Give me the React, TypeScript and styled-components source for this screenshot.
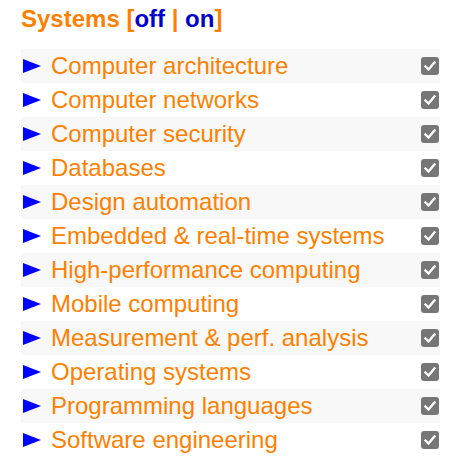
import React from "react";
import styled, { createGlobalStyle } from "styled-components";

const Global = createGlobalStyle`
  html, body { margin: 0; padding: 0; background: #fff; }
  body { font-family: "Liberation Sans", Arial, sans-serif; }
`;

const Panel = styled.div`
  padding: 5px 0 0 21px;
  width: 419px;
`;

const Title = styled.div`
  font-size: 24px;
  font-weight: bold;
  line-height: 28px;
  color: #ff7f00;
  margin-bottom: 16px;
  white-space: nowrap;
`;

const Link = styled.span`
  color: #0000cc;
`;

const List = styled.div`
  display: flex;
  flex-direction: column;
`;

const Row = styled.div<{ $shaded: boolean }>`
  display: flex;
  align-items: center;
  height: 34px;
  background: ${(p) => (p.$shaded ? "#f8f8f8" : "#fff")};
`;

const Arrow = styled.span`
  width: 0;
  height: 0;
  margin-left: 2px;
  margin-right: 10px;
  border-left: 18px solid #0000ff;
  border-top: 7.5px solid transparent;
  border-bottom: 7.5px solid transparent;
  flex-shrink: 0;
`;

const Label = styled.span`
  flex: 1;
  font-size: 24px;
  line-height: 34px;
  color: #ff8000;
  white-space: nowrap;
`;

const Box = styled.span`
  width: 18px;
  height: 18px;
  margin-right: 1px;
  border-radius: 3px;
  background: #767676;
  display: flex;
  align-items: center;
  justify-content: center;
  flex-shrink: 0;
`;

const items = [
  "Computer architecture",
  "Computer networks",
  "Computer security",
  "Databases",
  "Design automation",
  "Embedded & real-time systems",
  "High-performance computing",
  "Mobile computing",
  "Measurement & perf. analysis",
  "Operating systems",
  "Programming languages",
  "Software engineering",
];

export default function App() {
  return (
    <>
      <Global />
      <Panel>
        <Title>
          Systems [<Link>off</Link> | <Link>on</Link>]
        </Title>
        <List>
          {items.map((t, i) => (
            <Row key={t} $shaded={i % 2 === 0}>
              <Arrow />
              <Label>{t}</Label>
              <Box>
                <svg width="14" height="14" viewBox="0 0 14 14">
                  <path
                    d="M2.5 7.5 L5.5 10.5 L11.5 3.5"
                    fill="none"
                    stroke="#fff"
                    strokeWidth="2.4"
                    strokeLinecap="square"
                  />
                </svg>
              </Box>
            </Row>
          ))}
        </List>
      </Panel>
    </>
  );
}
